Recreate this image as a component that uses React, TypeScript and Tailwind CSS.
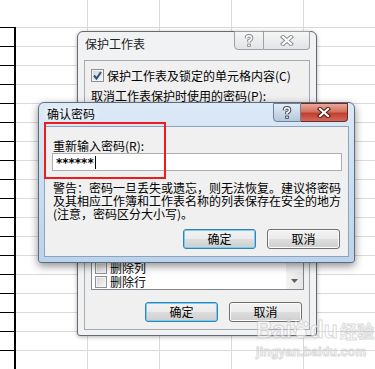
import React from 'react';

const FONT = "font-['Noto_Sans_CJK_SC','Liberation_Sans',sans-serif]";

// spreadsheet grid behind the dialogs
const SheetGrid: React.FC = () => {
  const cells: React.ReactNode[] = [];
  for (let r = 0; r < 19; r++) {
    for (let c = 0; c < 6; c++) {
      let cls = 'border-b border-r border-[#dadada]';
      if (c === 0) cls = r === 0 ? 'border-b border-black' : 'border-b border-r-2 border-black';
      cells.push(<div key={`${r}-${c}`} className={cls} />);
    }
  }
  return (
    <div className="grid grid-cols-[16px_72px_72px_72px_72px_72px] grid-rows-[28px_repeat(18,19px)]">
      {cells}
    </div>
  );
};

const CloseGlyph = ({ fill, stroke }: { fill: string; stroke: string }) => (
  <svg width="14" height="11" viewBox="0 0 14 11">
    <path d="M3 2 L11 9 M11 2 L3 9" stroke={stroke} strokeWidth="4.2" strokeLinecap="square" fill="none" />
    <path d="M3 2 L11 9 M11 2 L3 9" stroke={fill} strokeWidth="2.2" strokeLinecap="square" fill="none" />
  </svg>
);

const HelpGlyph = ({ fill, stroke }: { fill: string; stroke: string }) => (
  <svg width="10" height="14" viewBox="0 0 10 14">
    <path d="M2.5 4.2 Q2.5 1.8 5 1.8 Q7.5 1.8 7.5 4.2 Q7.5 5.8 5 6.8 L5 8.2" stroke={stroke} strokeWidth="3.6" fill="none" />
    <rect x="3.2" y="9.6" width="3.6" height="3.2" fill={stroke} />
    <path d="M2.5 4.2 Q2.5 1.8 5 1.8 Q7.5 1.8 7.5 4.2 Q7.5 5.8 5 6.8 L5 8.2" stroke={fill} strokeWidth="1.6" fill="none" />
    <rect x="4.2" y="10.5" width="1.6" height="1.5" fill={fill} />
  </svg>
);

const WinButton = ({ label, primary }: { label: string; primary?: boolean }) => (
  <div
    className={`w-[73px] h-[20px] rounded-[3px] border flex items-center justify-center text-[12px] leading-[14px] text-black bg-[linear-gradient(#f2f2f2_0%,#ebebeb_48%,#dddddd_52%,#cfcfcf_100%)] ${
      primary
        ? 'border-[#3c7fb1] shadow-[inset_0_0_0_1px_#6fd0f6]'
        : 'border-[#707070] shadow-[inset_0_0_0_1px_#fbfbfb]'
    }`}
  >
    {label}
  </div>
);

const CheckBox = ({ checked, size = 13 }: { checked?: boolean; size?: number }) => (
  <div
    className={`shrink-0 border border-[#8e8f8f] bg-[linear-gradient(135deg,#d2d2d2,#f8f8f8)] shadow-[inset_0_0_0_1px_#f4f4f4] flex items-center justify-center ${
      size === 13 ? 'w-[13px] h-[13px]' : 'w-[12px] h-[12px]'
    }`}
  >
    {checked && (
      <svg width="11" height="11" viewBox="0 0 11 11">
        <path d="M2 5.5 L4.5 8.5 L9 2" stroke="#2c4f86" strokeWidth="2" fill="none" />
      </svg>
    )}
  </div>
);

const ProtectSheetDialog: React.FC = () => (
  <div className="absolute left-[77px] top-[31px] w-[240px] h-[305px] rounded-t-[6px] rounded-b-[3px] border border-[#666a70] bg-[#f1f2f4] flex flex-col shadow-[0_1px_4px_rgba(0,0,0,0.3)]">
    <div className="h-[28px] flex items-start justify-between">
      <span className="ml-[7px] mt-[5px] text-[12px] leading-[14px] text-[#222]">保护工作表</span>
      <div className="flex mr-[6px] -mt-px">
        <div className="w-[30px] h-[19px] border border-[#9da1a6] rounded-bl-[4px] bg-linear-to-b from-[#f6f6f6] to-[#e2e4e7] flex items-center justify-center">
          <HelpGlyph fill="#ffffff" stroke="#8b8f95" />
        </div>
        <div className="w-[46px] h-[19px] border border-l-0 border-[#9da1a6] rounded-br-[4px] bg-linear-to-b from-[#f6f6f6] to-[#e2e4e7] flex items-center justify-center">
          <CloseGlyph fill="#ffffff" stroke="#8b8f95" />
        </div>
      </div>
    </div>
    <div className="flex-1 mx-[6px] mb-[5px] border border-[#a7a9ad] bg-[#f0f0f0] flex flex-col text-[12px] leading-[14px] text-black">
      <div className="mt-[8px] ml-[6px] h-[13px] flex items-center gap-[3px]">
        <CheckBox checked />
        <span className="whitespace-nowrap">保护工作表及锁定的单元格内容(C)</span>
      </div>
      <div className="mt-[7px] ml-[6px] whitespace-nowrap">取消工作表保护时使用的密码(P):</div>
      {/* password box and option label sit under the confirm dialog */}
      <div className="mt-[4px] ml-[6px] w-[212px] h-[18px] border border-[#abadb3] bg-white" />
      <div className="mt-[8px] h-[14px]" />
      <div className="mt-[3px] ml-[6px] w-[213px] h-[140px] border border-[#828790] bg-white flex">
        <div className="flex-1 flex flex-col justify-end overflow-hidden">
          {['删除列', '删除行'].map((t) => (
            <div key={t} className="h-[14px] flex items-center gap-[3px] pl-[3px]">
              <CheckBox size={12} />
              <span className="whitespace-nowrap">{t}</span>
            </div>
          ))}
        </div>
        <div className="w-[17px] flex flex-col justify-end bg-[#f0f0f0]">
          <div className="h-[17px] bg-linear-to-r from-[#f3f3f3] to-[#e6e6e6] flex items-center justify-center">
            <svg width="7" height="4" viewBox="0 0 7 4">
              <path d="M0 0 H7 L3.5 4 Z" fill="#606060" />
            </svg>
          </div>
        </div>
      </div>
      <div className="mt-[12px] flex justify-end gap-[11px] pr-[7px]">
        <WinButton label="确定" primary />
        <WinButton label="取消" />
      </div>
    </div>
  </div>
);

const ConfirmPasswordDialog: React.FC = () => (
  <div className="absolute left-[38px] top-[102px] w-[317px] h-[161px] rounded-t-[6px] rounded-b-[3px] border border-[#5d6b7c] bg-linear-to-b from-[#dce9f7] to-[#bcd3ec] flex flex-col shadow-[0_3px_8px_rgba(0,0,0,0.45)]">
    <div className="h-[23px] flex items-start justify-between">
      <span className="ml-[8px] mt-[4px] text-[12px] leading-[14px] text-black [text-shadow:0_0_6px_#fff,0_0_10px_#fff]">
        确认密码
      </span>
      <div className="flex mr-[6px]">
        <div className="w-[28px] h-[19px] border border-[#6f8196] rounded-bl-[4px] bg-linear-to-b from-[#e2ecf6] to-[#b5c8dc] flex items-center justify-center">
          <HelpGlyph fill="#ffffff" stroke="#3d4a5a" />
        </div>
        <div className="w-[47px] h-[19px] border border-l-0 border-[#6b2a22] rounded-br-[4px] bg-[linear-gradient(#eaa99b_0%,#d5705f_45%,#c23f30_55%,#d06a5c_100%)] flex items-center justify-center">
          <CloseGlyph fill="#ffffff" stroke="#4a1a14" />
        </div>
      </div>
    </div>
    <div className="flex-1 mx-[5px] mb-[5px] border border-[#8da2bb] bg-[#f0f0f0] flex flex-col text-[12px] leading-[14px] text-black">
      <div className="mt-[12px] ml-[8px] whitespace-nowrap">重新输入密码(R):</div>
      <div className="ml-[7px] w-[290px] h-[18px] border border-[#abadb3] bg-white flex items-center pl-[3px]">
        <span className="mt-[2px] font-['DejaVu_Sans',sans-serif] font-bold text-[12px] leading-[12px]">******</span>
        <span className="ml-px w-px h-[13px] bg-black" />
      </div>
      <p className="mt-[10px] ml-[8px] leading-[13px] whitespace-nowrap">
        警告：密码一旦丢失或遗忘，则无法恢复。建议将密码
        <br />
        及其相应工作簿和工作表名称的列表保存在安全的地方
        <br />
        (注意，密码区分大小写)。
      </p>
      <div className="mt-[9px] flex justify-end gap-[11px] pr-[8px]">
        <WinButton label="确定" primary />
        <WinButton label="取消" />
      </div>
    </div>
    {/* red highlight drawn over the screenshot */}
    <div className="absolute left-[5px] top-[19px] w-[122px] h-[57px] border-2 border-[#ee1c1c]" />
  </div>
);

const Watermark: React.FC = () => (
  <div className="absolute left-[256px] top-[320px] flex flex-col opacity-60 text-white [-webkit-text-stroke:1px_#c4c4c4] pointer-events-none">
    <div className="flex items-end">
      <span className="font-['Liberation_Sans',sans-serif] font-bold text-[23px] leading-[20px]">Bai</span>
      <svg width="18" height="22" viewBox="0 0 18 22" className="-mt-[6px]">
        <g fill="#fff" stroke="#c4c4c4" strokeWidth="1">
          <ellipse cx="4" cy="6" rx="2" ry="2.6" />
          <ellipse cx="9" cy="3.5" rx="2" ry="2.6" />
          <ellipse cx="14" cy="6" rx="2" ry="2.6" />
          <ellipse cx="3" cy="12" rx="1.8" ry="2.2" />
          <path d="M9 9 C13 9 16 16 13 19 C11 21 7 21 5 19 C2 16 5 9 9 9 Z" />
        </g>
      </svg>
      <span className="font-['Liberation_Sans',sans-serif] font-bold text-[23px] leading-[20px]">du</span>
      <span className="ml-[2px] text-[17px] leading-[18px] font-bold">经验</span>
    </div>
    <span className="mt-[5px] font-['Liberation_Sans',sans-serif] text-[12px] leading-[14px] font-bold tracking-[0.3px]">
      jingyan.baidu.com
    </span>
  </div>
);

export default function App() {
  return (
    <div className={`relative w-[375px] h-[369px] overflow-hidden bg-white ${FONT}`}>
      <SheetGrid />
      <ProtectSheetDialog />
      <ConfirmPasswordDialog />
      <Watermark />
    </div>
  );
}
